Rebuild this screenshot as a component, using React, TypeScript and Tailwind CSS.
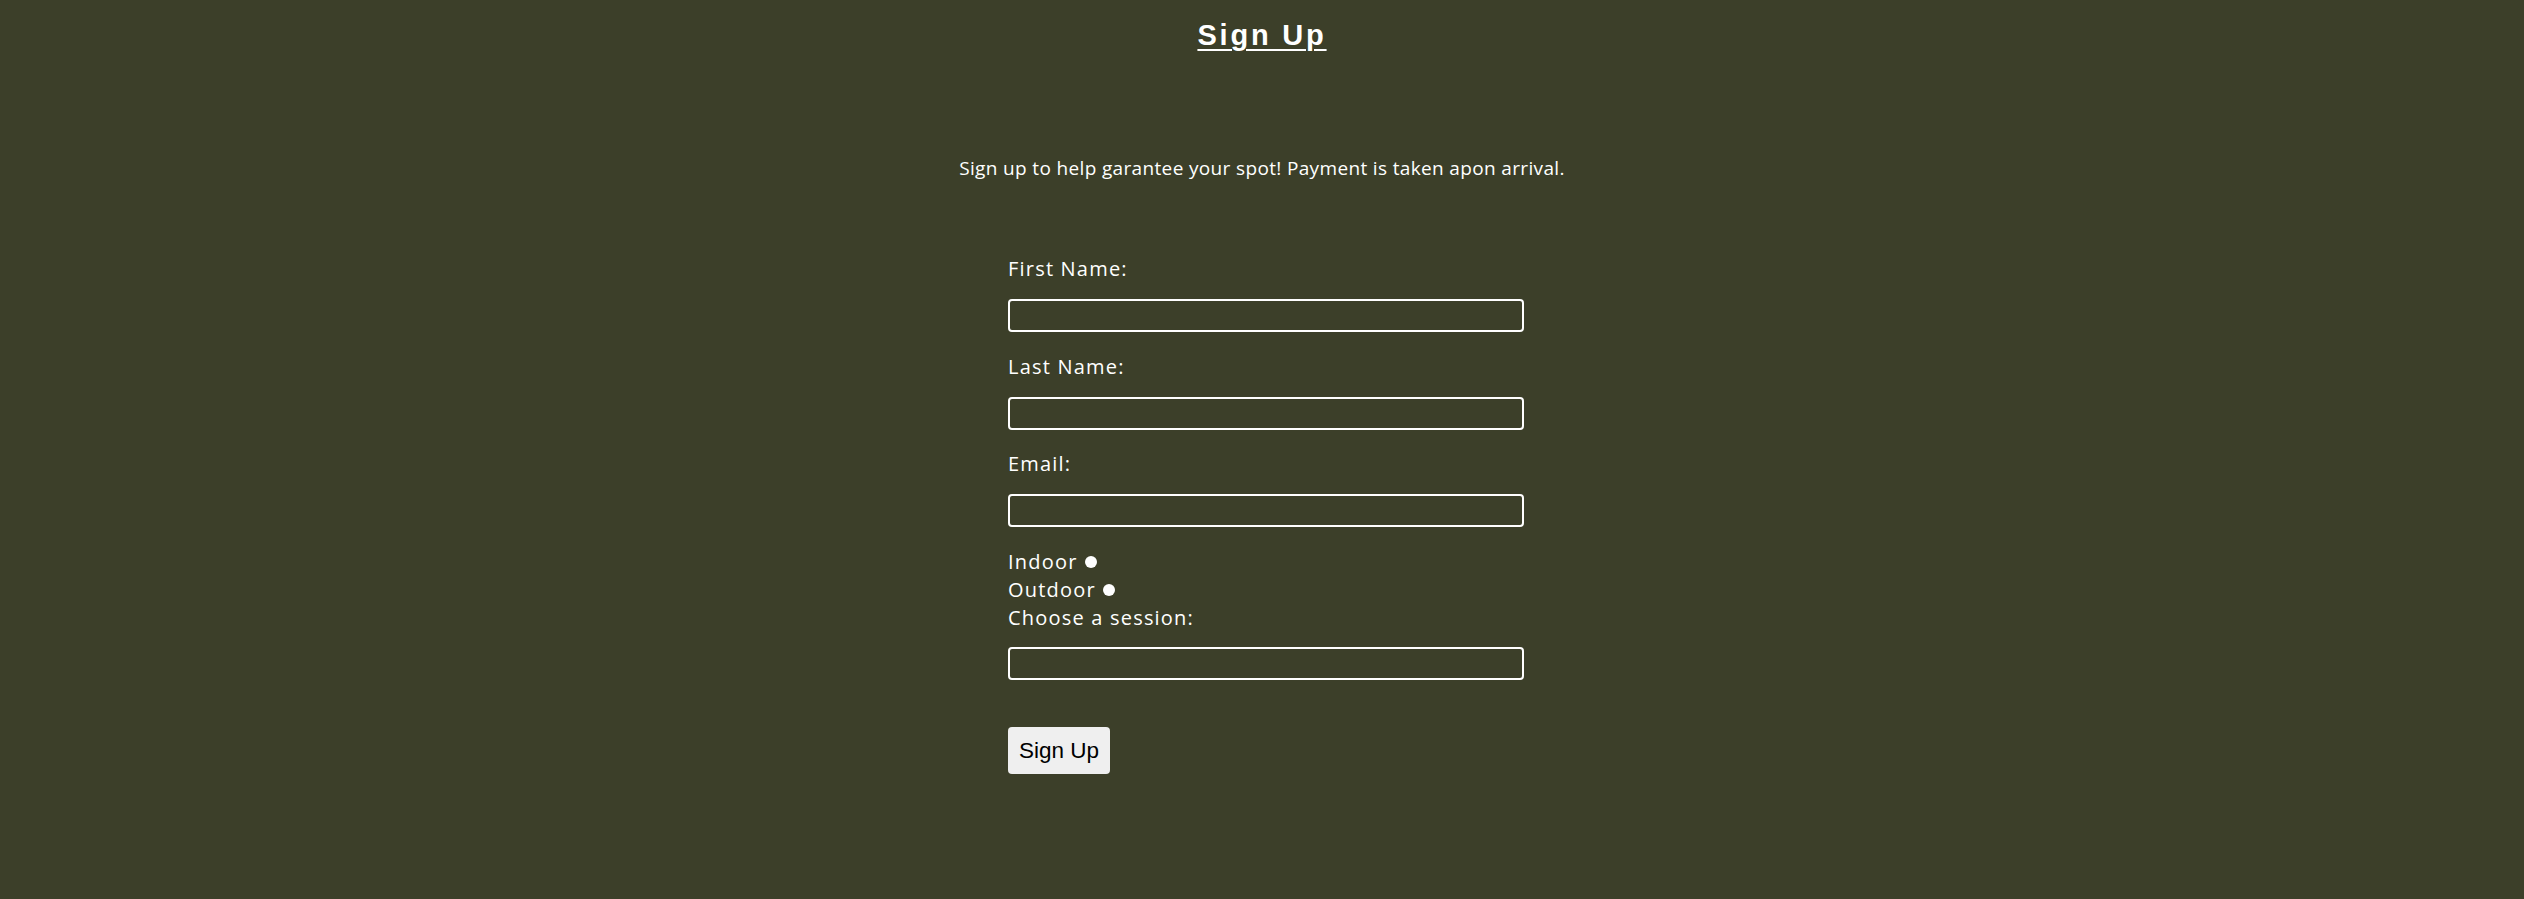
import React from "react";

function Field({ label }: { label: string }) {
  return (
    <div className="flex flex-col">
      <label className="text-[20px] leading-[28px] tracking-[1.2px] text-white">{label}</label>
      <input
        type="text"
        className="mt-[16px] h-[33px] w-[516px] rounded-[4px] border-2 border-white bg-transparent outline-none"
      />
    </div>
  );
}

export default function App() {
  return (
    <div
      className="min-h-[899px] w-full bg-[#3c3f29] text-white"
      style={{ fontFamily: '"Open Sans", "Noto Sans", sans-serif' }}
    >
      <h1
        className="pt-[18px] text-center text-[29px] font-bold leading-[34px] tracking-[2.8px] underline decoration-2 underline-offset-[4px]"
        style={{ fontFamily: '"Liberation Sans", Arial, sans-serif' }}
      >
        Sign Up
      </h1>
      <p className="mt-[103px] text-center text-[19px] leading-[26px] tracking-[0.35px]">
        Sign up to help garantee your spot! Payment is taken apon arrival.
      </p>
      <form className="mx-auto mt-[74px] flex w-[524px] flex-col pl-[8px]">
        <div className="flex flex-col gap-[20.5px]">
          <Field label="First Name:" />
          <Field label="Last Name:" />
          <Field label="Email:" />
        </div>
        <div className="mt-[21px] flex flex-col text-[20px] leading-[28px] tracking-[1.2px]">
          <div className="flex items-center">
            <span>Indoor</span>
            <span className="ml-[7px] h-[12px] w-[12px] rounded-full bg-white" />
          </div>
          <div className="flex items-center">
            <span>Outdoor</span>
            <span className="ml-[7px] h-[12px] w-[12px] rounded-full bg-white" />
          </div>
          <label>Choose a session:</label>
          <input
            type="text"
            className="mt-[15px] h-[33px] w-[516px] rounded-[4px] border-2 border-white bg-transparent outline-none"
          />
        </div>
        <div className="mt-[47px]">
          <button
            type="button"
            className="h-[47px] w-[102px] rounded-[4px] bg-[#efefef] text-[22.5px] tracking-normal text-black"
            style={{ fontFamily: '"Liberation Sans", Arial, sans-serif' }}
          >
            Sign Up
          </button>
        </div>
      </form>
    </div>
  );
}
